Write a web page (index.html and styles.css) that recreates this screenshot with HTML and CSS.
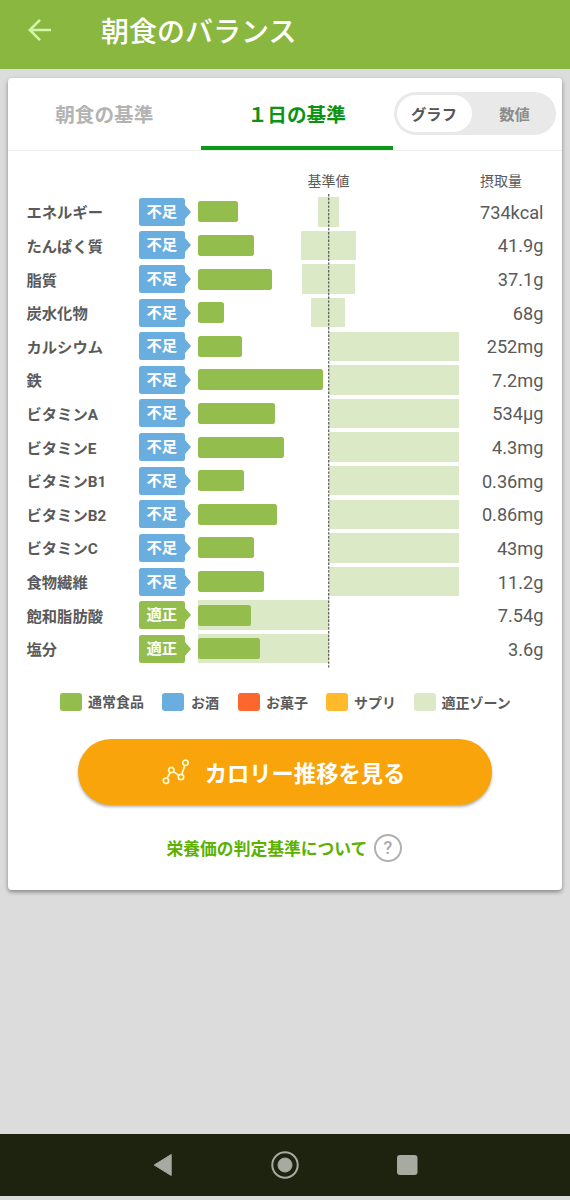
FILE: index.html
```
<!DOCTYPE html>
<html lang="ja">
<head>
    <meta charset="UTF-8">
    <meta name="viewport" content="width=device-width, initial-scale=1.0">
    <title>朝食のバランス</title>
    <link rel="stylesheet" href="styles.css">
</head>
<body>
    <header>
        <svg class="back" width="24" height="24" viewBox="0 0 24 24"><path d="M23 12H2M12 1.800L1.800 12L12 22.200"/></svg>
        <h1>朝食のバランス</h1>
    </header>
    <main class="card">
        <div class="tabs">
            <div class="tab">朝食の基準</div>
            <div class="tab active">１日の基準</div>
            <div class="toggle">
                <span class="on">グラフ</span>
                <span>数値</span>
            </div>
        </div>
        <div class="chart-head">
            <span class="head-base">基準値</span>
            <span class="head-amount">摂取量</span>
        </div>
        <div class="chart">
            <div class="row"><span class="name">エネルギー</span><span class="badge">不足</span><div class="plot"><i class="zone" style="left:120.300px;width:21px"></i><i class="bar" style="width:40px"></i></div><span class="value">734kcal</span></div>
            <div class="row"><span class="name">たんぱく質</span><span class="badge">不足</span><div class="plot"><i class="zone" style="left:103.300px;width:55px"></i><i class="bar" style="width:56px"></i></div><span class="value">41.9g</span></div>
            <div class="row"><span class="name">脂質</span><span class="badge">不足</span><div class="plot"><i class="zone" style="left:104.500px;width:52.500px"></i><i class="bar" style="width:74px"></i></div><span class="value">37.1g</span></div>
            <div class="row"><span class="name">炭水化物</span><span class="badge">不足</span><div class="plot"><i class="zone" style="left:113.700px;width:33.500px"></i><i class="bar" style="width:26px"></i></div><span class="value">68g</span></div>
            <div class="row"><span class="name">カルシウム</span><span class="badge">不足</span><div class="plot"><i class="zone over"></i><i class="bar" style="width:44.300px"></i></div><span class="value">252mg</span></div>
            <div class="row"><span class="name">鉄</span><span class="badge">不足</span><div class="plot"><i class="zone over"></i><i class="bar" style="width:125.300px"></i></div><span class="value">7.2mg</span></div>
            <div class="row"><span class="name">ビタミンA</span><span class="badge">不足</span><div class="plot"><i class="zone over"></i><i class="bar" style="width:77px"></i></div><span class="value">534μg</span></div>
            <div class="row"><span class="name">ビタミンE</span><span class="badge">不足</span><div class="plot"><i class="zone over"></i><i class="bar" style="width:86px"></i></div><span class="value">4.3mg</span></div>
            <div class="row"><span class="name">ビタミンB1</span><span class="badge">不足</span><div class="plot"><i class="zone over"></i><i class="bar" style="width:46.700px"></i></div><span class="value">0.36mg</span></div>
            <div class="row"><span class="name">ビタミンB2</span><span class="badge">不足</span><div class="plot"><i class="zone over"></i><i class="bar" style="width:79.300px"></i></div><span class="value">0.86mg</span></div>
            <div class="row"><span class="name">ビタミンC</span><span class="badge">不足</span><div class="plot"><i class="zone over"></i><i class="bar" style="width:56px"></i></div><span class="value">43mg</span></div>
            <div class="row"><span class="name">食物繊維</span><span class="badge">不足</span><div class="plot"><i class="zone over"></i><i class="bar" style="width:66.300px"></i></div><span class="value">11.2g</span></div>
            <div class="row"><span class="name">飽和脂肪酸</span><span class="badge good">適正</span><div class="plot"><i class="zone under"></i><i class="bar" style="width:53.300px"></i></div><span class="value">7.54g</span></div>
            <div class="row"><span class="name">塩分</span><span class="badge good">適正</span><div class="plot"><i class="zone under"></i><i class="bar" style="width:62.500px"></i></div><span class="value">3.6g</span></div>
            <svg class="base-line" width="2" height="474"><path d="M.7 0V474"/></svg>
        </div>
        <div class="legend">
            <span class="key food">通常食品</span>
            <span class="key alcohol">お酒</span>
            <span class="key sweets">お菓子</span>
            <span class="key supple">サプリ</span>
            <span class="key proper">適正ゾーン</span>
        </div>
        <button class="trend">
            <svg width="28" height="26" viewBox="0 0 28 26"><circle cx="4" cy="21.700" r="2.700"/><circle cx="9.300" cy="11" r="2.700"/><circle cx="19" cy="18" r="2.700"/><circle cx="23.500" cy="3.800" r="2.700"/><path d="M5.200 19.200L8.100 13.500M11.500 12.600L16.800 16.400M19.800 15.400L22.700 6.400"/></svg>
            カロリー推移を見る
        </button>
        <div class="about">
            <a href="#">栄養価の判定基準について</a>
            <span class="help">?</span>
        </div>
    </main>
    <nav>
        <svg width="20" height="24" viewBox="0 0 20 24"><path d="M18.200 1.500V22.500L1.200 12Z"/></svg>
        <svg width="28" height="28" viewBox="0 0 28 28"><circle class="ring" cx="14" cy="14" r="12.700"/><circle cx="14" cy="14" r="7"/></svg>
        <svg width="21" height="20" viewBox="0 0 21 20"><rect width="20.500" height="20" rx="3"/></svg>
    </nav>
</body>
</html>
```
FILE: styles.css
```
* {
    margin: 0;
    padding: 0;
    box-sizing: border-box;
}
body {
    height: 1200px;
    display: flex;
    flex-direction: column;
    overflow: hidden;
    background-color: #dcdcdc;
    color: #5a5a5a;
    font-family: Roboto, 'Noto Sans CJK JP', sans-serif;
}
header {
    height: 69px;
    display: flex;
    align-items: flex-start;
    background-color: #89b73f;
    color: white;
}
.back {
    margin: 18px 49px 0 28px;
    fill: none;
    stroke: #d3f5a8;
    stroke-width: 2.6;
}
h1 {
    margin-top: 13px;
    font-size: 28px;
    line-height: 40px;
    font-weight: 500;
}
.card {
    width: 553.5px;
    height: 812px;
    margin: 9px 0 0 8px;
    background: white;
    border-radius: 4px;
    box-shadow: 0 2px 4px rgba(0, 0, 0, 0.4);
}
.tabs {
    height: 72.5px;
    display: flex;
    border-bottom: 1px solid #eee;
}
.tab {
    width: 192.5px;
    height: 71.5px;
    text-align: center;
    line-height: 75px;
    font-size: 19.6px;
    font-weight: bold;
    color: #b3b3b3;
}
.tab.active {
    color: #0a9314;
    border-bottom: 4.5px solid #0a9a18;
}
.toggle {
    width: 162px;
    height: 43px;
    margin: 14px 0 0 .5px;
    padding: 3px;
    display: flex;
    background: #e9e9e9;
    border-radius: 22px;
    font-size: 15.3px;
    font-weight: bold;
    line-height: 40px;
    color: #8c8c8c;
}
.toggle span {
    flex: 1;
    text-align: center;
    padding-left: 5px;
}
.toggle .on {
    flex: none;
    width: 75px;
    padding: 0;
    background: white;
    border-radius: 19px;
    color: #555;
}
.chart-head {
    display: flex;
    height: 44.5px;
    padding: 20px 0 0 299.5px;
    font-size: 14px;
    line-height: 21px;
}
.head-base {
    width: 172.5px;
}
.chart {
    position: relative;
    padding: 0 18px 0 18.5px;
}
.row {
    display: flex;
    align-items: center;
    height: 33.62px;
}
.name {
    width: 112px;
    font-size: 15.3px;
    font-weight: bold;
    line-height: 24px;
    padding-top: 3px;
}
.badge {
    position: relative;
    width: 46.5px;
    height: 28px;
    background: #6aaee0;
    border-radius: 2.5px;
    color: white;
    font-size: 15.3px;
    font-weight: bold;
    line-height: 29px;
    text-align: center;
}
.badge::after {
    content: '';
    position: absolute;
    left: 46px;
    top: 7px;
    border-left: 6px solid #6aaee0;
    border-top: 7px solid transparent;
    border-bottom: 7px solid transparent;
}
.badge.good {
    background: #93be4e;
}
.badge.good::after {
    border-left-color: #93be4e;
}
.plot {
    position: relative;
    display: flex;
    align-items: center;
    width: 262px;
    height: 29.4px;
    margin-left: 12.5px;
}
/* the intake bar lies over the proper zone */
.zone {
    position: absolute;
    top: 0;
    bottom: 0;
    background: #dbe9c6;
}
.zone.over {
    left: 131.3px;
    width: 130.6px;
}
.zone.under {
    left: 0;
    width: 131px;
}
.bar {
    position: relative;
    height: 21px;
    background: #93be4e;
    border-radius: 2.5px;
}
.value {
    flex: 1;
    text-align: right;
    font-size: 18.2px;
    line-height: 24px;
    padding-top: 2px;
}
.base-line {
    position: absolute;
    left: 319.8px;
    top: -1px;
    stroke: #555;
    stroke-width: 1.2;
    stroke-dasharray: 2.4 1.4;
}
.legend {
    display: flex;
    align-items: center;
    gap: 18px;
    height: 22px;
    margin: 25.5px 0 0 52px;
    font-size: 14px;
    font-weight: bold;
    line-height: 22px;
    white-space: nowrap;
}
.key {
    display: flex;
    align-items: center;
    height: 22px;
    padding-top: 2px;
}
.key.food {
    padding-top: 0;
}
.key::before {
    content: '';
    width: 22px;
    height: 18px;
    margin: -2px 6px 0 0;
    border-radius: 3px;
    background: #93be4e;
}
.key.food::before {
    margin-top: 0;
}
.key.alcohol {
    margin-right: 1px;
}
.key.alcohol::before {
    margin-right: 7px;
    background: #6aaee0;
}
.key.sweets::before {
    background: #fc672e;
}
.key.supple::before {
    background: #ffb92b;
}
.key.proper::before {
    margin-right: 5.5px;
    background: #dbe9c6;
}
.trend {
    width: 414px;
    height: 66px;
    margin: 26px 0 0 70px;
    padding-right: 3px;
    display: flex;
    align-items: center;
    justify-content: center;
    gap: 15px;
    border: none;
    border-radius: 33px;
    background: #f9a40b;
    box-shadow: 0 2px 3px rgba(0, 0, 0, 0.3);
    color: white;
    font-family: inherit;
    font-size: 22.3px;
    font-weight: bold;
}
.trend svg {
    fill: none;
    stroke: #fffbd0;
    stroke-width: 1.7;
}
.about {
    display: flex;
    align-items: center;
    height: 28px;
    margin: 29px 0 0 158.5px;
    gap: 6.5px;
}
.about a {
    color: #5bb100;
    font-size: 16.8px;
    font-weight: bold;
    text-decoration: none;
}
.help {
    width: 28px;
    height: 28px;
    border: 2px solid #b0b0b0;
    border-radius: 50%;
    text-align: center;
    font-size: 18px;
    font-weight: 500;
    line-height: 24px;
    color: #aaa;
}
nav {
    height: 61.5px;
    margin: auto 0 4.5px;
    display: flex;
    align-items: center;
    padding-left: 153px;
    gap: 98px;
    background: #1d230f;
}
nav svg {
    fill: #a6aaa0;
    stroke: #a6aaa0;
    stroke-width: 1;
    stroke-linejoin: round;
    overflow: visible;
}
nav .ring {
    fill: none;
    stroke-width: 2;
}
nav rect {
    stroke: none;
}
```
